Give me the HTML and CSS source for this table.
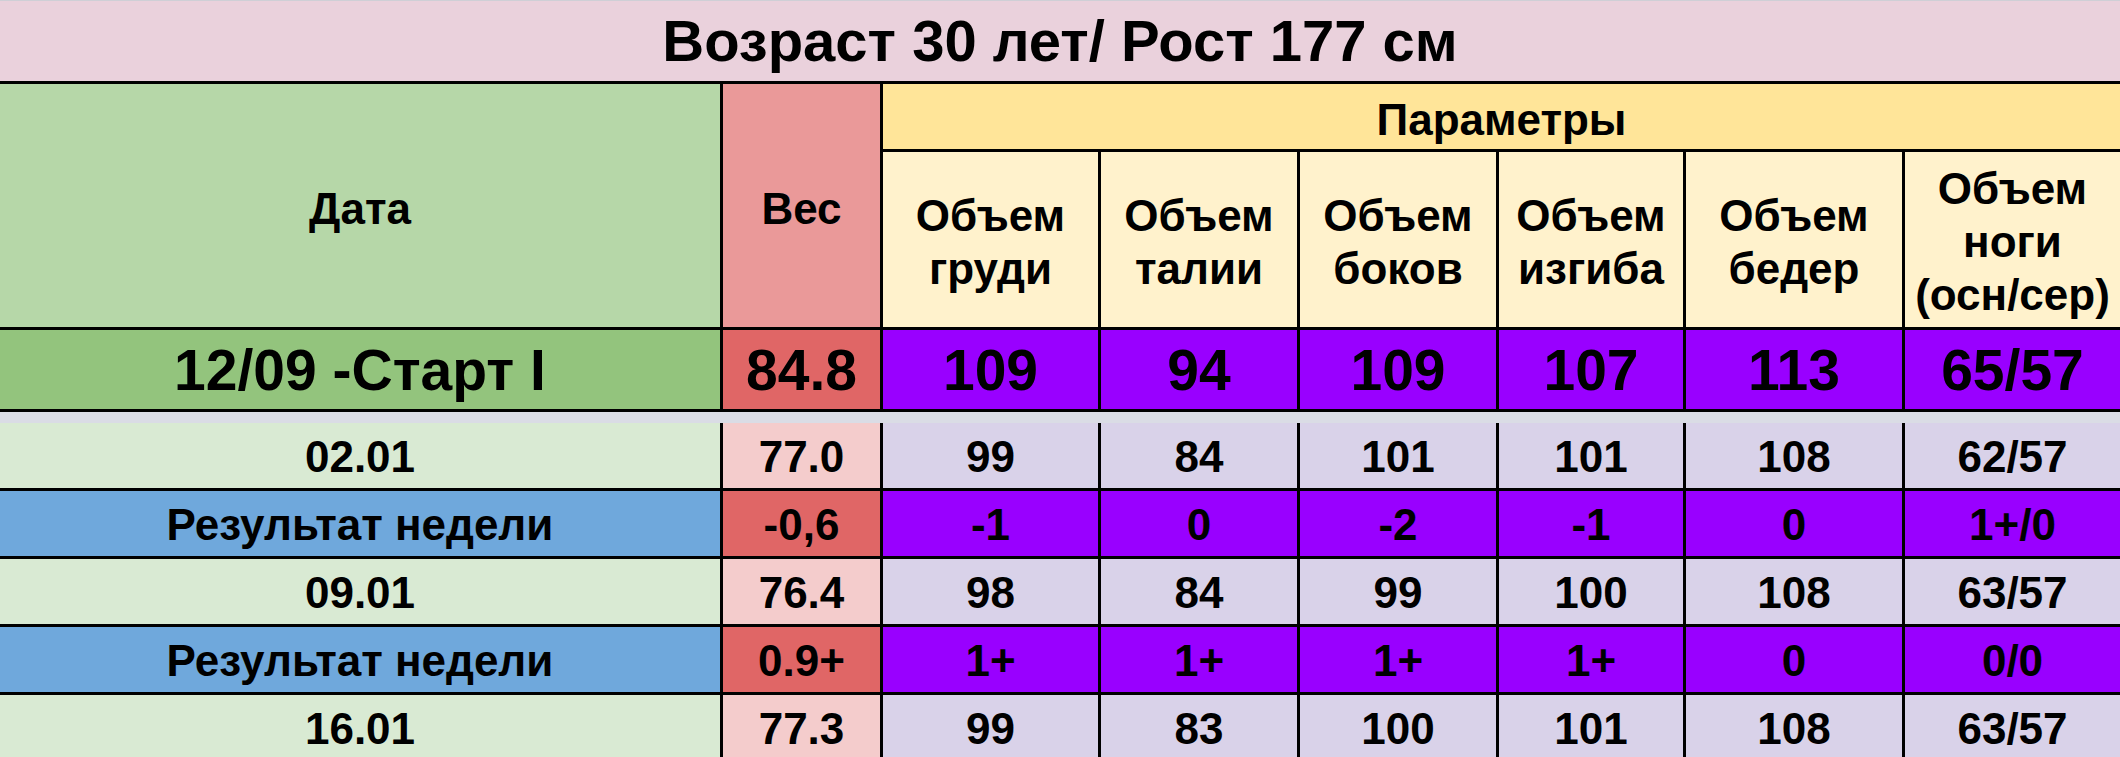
FILE: index.html
```html
<!DOCTYPE html>
<html lang="ru">
<head>
<meta charset="utf-8">
<title>Возраст 30 лет/ Рост 177 см</title>
<link rel="stylesheet" href="styles.css">
</head>
<body>
<div class="sheet">
  <div class="title">Возраст 30 лет/ Рост 177 см</div>

  <div class="grid head">
    <div class="cell h-date">Дата</div>
    <div class="cell h-weight">Вес</div>
    <div class="cell h-params">Параметры</div>
    <div class="cell h-sub">Объем<br>груди</div>
    <div class="cell h-sub">Объем<br>талии</div>
    <div class="cell h-sub">Объем<br>боков</div>
    <div class="cell h-sub">Объем<br>изгиба</div>
    <div class="cell h-sub">Объем<br>бедер</div>
    <div class="cell h-sub">Объем<br>ноги<br>(осн/сер)</div>
  </div>

  <div class="grid start">
    <div class="cell s-date">12/09 -Старт I</div>
    <div class="cell s-weight">84.8</div>
    <div class="cell s-val">109</div>
    <div class="cell s-val">94</div>
    <div class="cell s-val">109</div>
    <div class="cell s-val">107</div>
    <div class="cell s-val">113</div>
    <div class="cell s-val">65/57</div>
  </div>

  <div class="freeze"></div>

  <div class="grid body">
    <div class="cell d-date">02.01</div>
    <div class="cell d-weight">77.0</div>
    <div class="cell d-val">99</div>
    <div class="cell d-val">84</div>
    <div class="cell d-val">101</div>
    <div class="cell d-val">101</div>
    <div class="cell d-val">108</div>
    <div class="cell d-val">62/57</div>

    <div class="cell r-date">Результат недели</div>
    <div class="cell r-weight">-0,6</div>
    <div class="cell r-val">-1</div>
    <div class="cell r-val">0</div>
    <div class="cell r-val">-2</div>
    <div class="cell r-val">-1</div>
    <div class="cell r-val">0</div>
    <div class="cell r-val">1+/0</div>

    <div class="cell d-date">09.01</div>
    <div class="cell d-weight">76.4</div>
    <div class="cell d-val">98</div>
    <div class="cell d-val">84</div>
    <div class="cell d-val">99</div>
    <div class="cell d-val">100</div>
    <div class="cell d-val">108</div>
    <div class="cell d-val">63/57</div>

    <div class="cell r-date">Результат недели</div>
    <div class="cell r-weight">0.9+</div>
    <div class="cell r-val">1+</div>
    <div class="cell r-val">1+</div>
    <div class="cell r-val">1+</div>
    <div class="cell r-val">1+</div>
    <div class="cell r-val">0</div>
    <div class="cell r-val">0/0</div>

    <div class="cell d-date">16.01</div>
    <div class="cell d-weight">77.3</div>
    <div class="cell d-val">99</div>
    <div class="cell d-val">83</div>
    <div class="cell d-val">100</div>
    <div class="cell d-val">101</div>
    <div class="cell d-val">108</div>
    <div class="cell d-val">63/57</div>
  </div>
</div>
</body>
</html>
```

FILE: styles.css
```css
html, body {
  margin: 0;
  padding: 0;
  overflow: hidden;
  background: #ffffff;
}

.sheet {
  width: 2120px;
  display: flex;
  flex-direction: column;
  font-family: "Liberation Sans", Arial, sans-serif;
  font-weight: bold;
  color: #000;
}

.title {
  height: 80px;
  border-top: 1px solid #cfcfd6;
  border-bottom: 3px solid #000;
  background: #ead1dc;
  display: flex;
  align-items: center;
  justify-content: center;
  font-size: 58px;
  line-height: 1;
}

.grid {
  display: grid;
  grid-template-columns: 720px 157px 215px 196px 196px 184px 216px 215px;
  gap: 3px;
  background: #000;
}

.cell {
  display: flex;
  align-items: center;
  justify-content: center;
  text-align: center;
  white-space: nowrap;
  font-size: 44px;
  line-height: 1.15;
  box-sizing: border-box;
}

/* header */
.head {
  grid-template-rows: 65px 175px;
  border-bottom: 3px solid #000;
}
.h-date {
  grid-row: 1 / span 2;
  background: #b6d7a8;
  padding-top: 7px;
}
.h-weight {
  grid-row: 1 / span 2;
  background: #ea9999;
  padding-top: 7px;
}
.h-params {
  grid-column: 3 / span 6;
  background: #ffe599;
  padding-top: 8px;
}
.h-sub {
  background: #fff2cc;
  line-height: 53px;
  padding-top: 4px;
}

/* start row */
.start {
  grid-template-rows: 79px;
  border-bottom: 3px solid #000;
}
.start .cell {
  font-size: 57px;
  padding-top: 2px;
}
.s-date { background: #93c47d; }
.s-weight { background: #e06666; }
.s-val { background: #9900ff; }

/* frozen divider */
.freeze {
  height: 11px;
  background: #dadce5;
}

/* body rows */
.body {
  grid-auto-rows: 65px;
}
.body .cell {
  padding-top: 4px;
}
.d-date { background: #d9ead3; }
.d-weight { background: #f4cccc; }
.d-val { background: #d9d2e9; }
.r-date { background: #6fa8dc; }
.r-weight { background: #e06666; }
.r-val { background: #9900ff; }
```
